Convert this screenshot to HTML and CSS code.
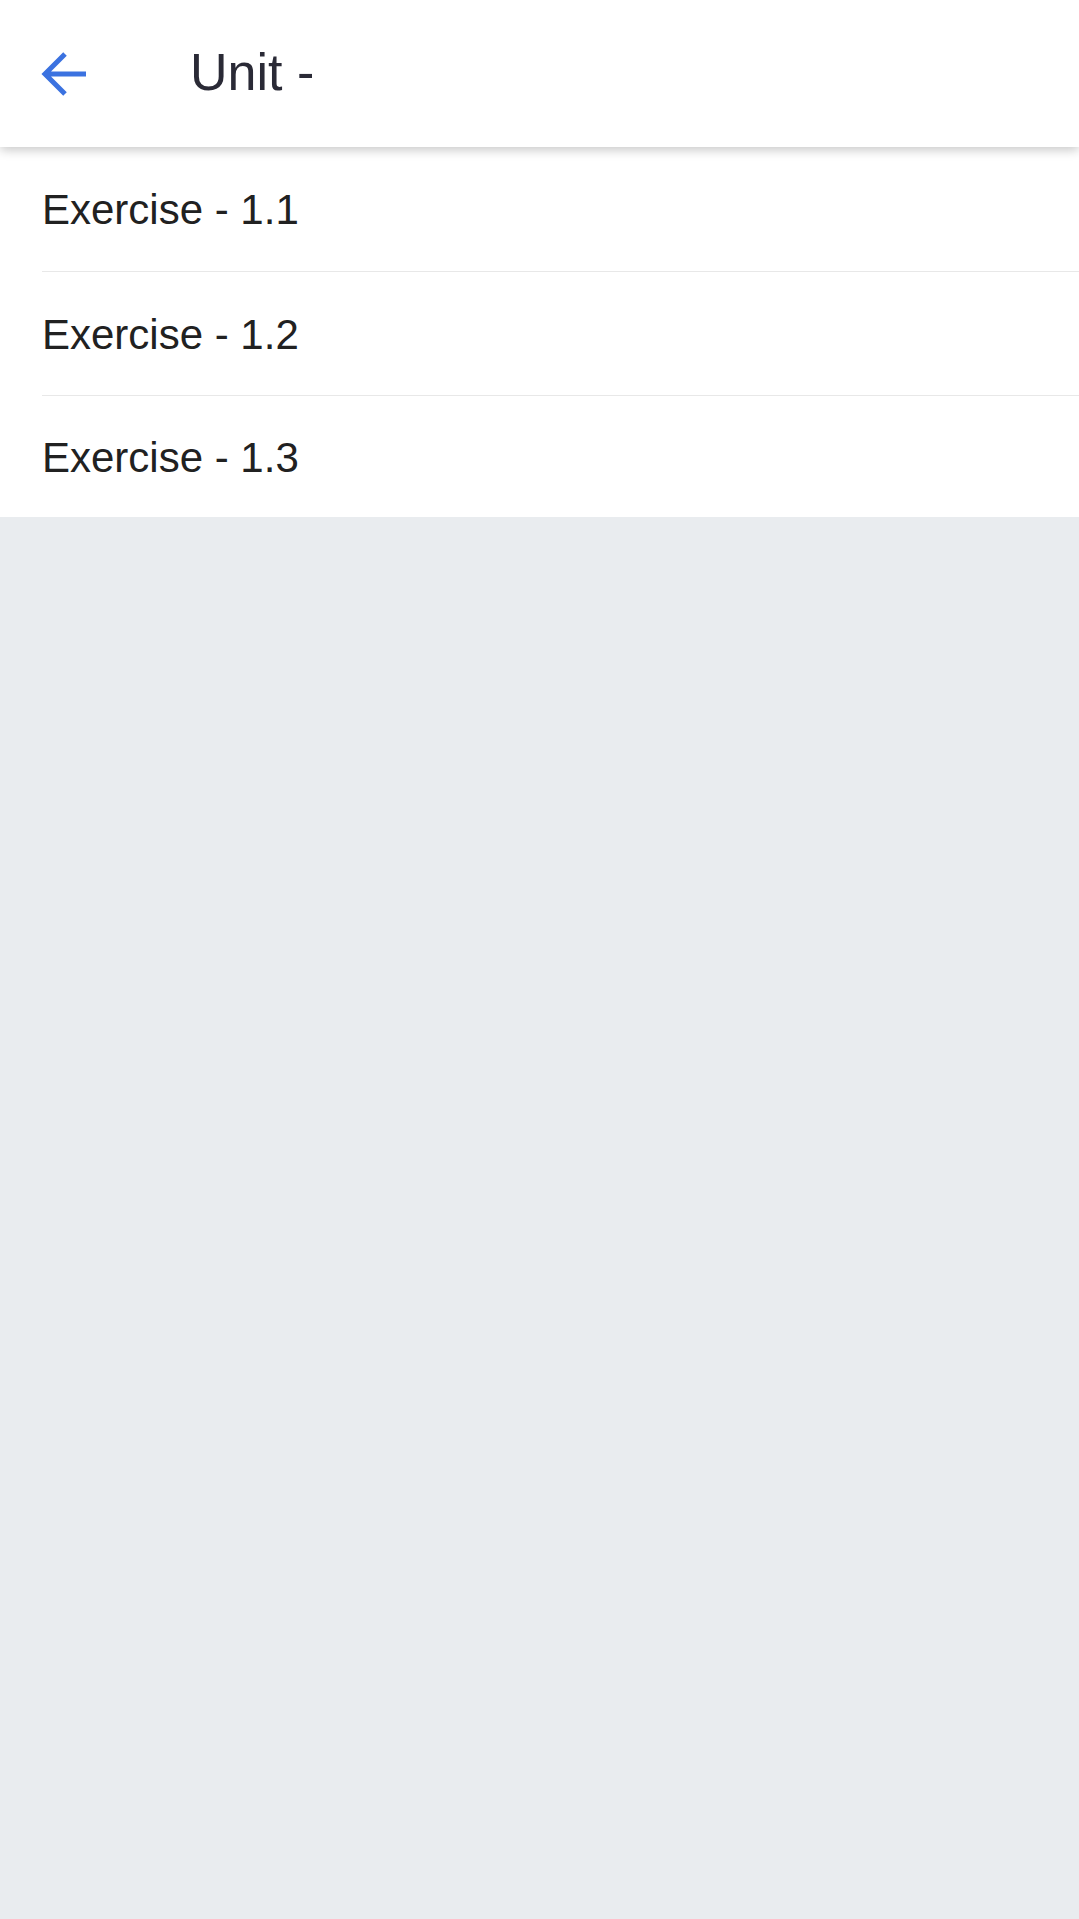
FILE: index.html
```html
<!DOCTYPE html>
<html lang="en">
<head>
    <meta charset="UTF-8">
    <meta name="viewport" content="width=device-width, initial-scale=1.0">
    <title>Unit</title>
    <link rel="stylesheet" href="styles.css">
</head>
<body>
    <header class="topbar">
        <button class="back-btn" aria-label="Back">
            <svg width="48" height="48" viewBox="0 0 48 48">
                <path d="M47 24H6M26 4L6 24l20 20" fill="none" stroke="#3b72e0" stroke-width="5" stroke-linejoin="miter"/>
            </svg>
        </button>
        <h1 class="title">Unit -</h1>
    </header>

    <ul class="exercise-list">
        <li class="exercise-item">Exercise - 1.1</li>
        <li class="exercise-item">Exercise - 1.2</li>
        <li class="exercise-item">Exercise - 1.3</li>
    </ul>
</body>
</html>
```

FILE: styles.css
```css
html, body {
    margin: 0;
    padding: 0;
    height: 100%;
}

body {
    font-family: "Liberation Sans", Arial, sans-serif;
    background-color: #e9ecef;
}

.topbar {
    position: relative;
    z-index: 2;
    height: 147px;
    background: #fff;
    display: flex;
    align-items: center;
    padding-left: 39px;
    box-shadow: 0 3px 10px rgba(0, 0, 0, 0.22);
}

.back-btn {
    background: none;
    border: none;
    padding: 0;
    width: 48px;
    height: 48px;
    display: flex;
    cursor: pointer;
}

.title {
    margin: 0 0 4px 103px;
    font-size: 52px;
    font-weight: normal;
    color: #2a2a36;
}

.exercise-list {
    list-style: none;
    margin: 0;
    padding: 0;
    background: #fff;
}

.exercise-item {
    height: 125px;
    display: flex;
    align-items: center;
    margin-left: 42px;
    padding-top: 2px;
    box-sizing: border-box;
    font-size: 42px;
    color: #212121;
    border-bottom: 1px solid #e8e8e8;
}

.exercise-item:nth-child(2) {
    height: 124px;
}

.exercise-item:last-child {
    border-bottom: none;
    height: 121px;
}
```
